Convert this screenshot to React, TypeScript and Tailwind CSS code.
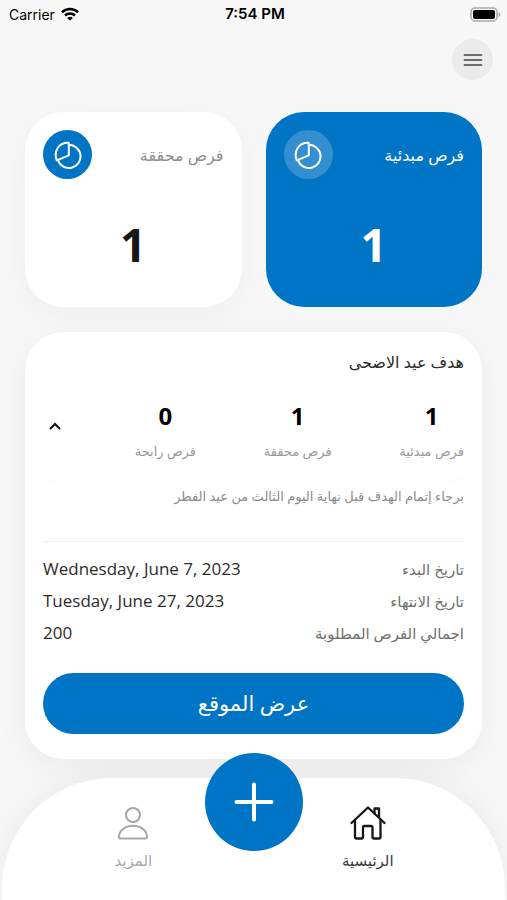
import { useState } from "react"

const chances = [
  { label: "فرص مبدئية", value: 1 },
  { label: "فرص محققة", value: 1 },
  { label: "فرص رابحة", value: 0 },
]

const details = [
  { label: "تاريخ البدء", value: "Wednesday, June 7, 2023" },
  { label: "تاريخ الانتهاء", value: "Tuesday, June 27, 2023" },
  { label: "اجمالي الفرص المطلوبة", value: "200" },
]

function PieIcon() {
  return (
    <svg width="28" height="28" viewBox="0 0 28 28" fill="none" stroke="currentColor" strokeWidth="2" strokeLinejoin="round" aria-hidden="true">
      <path d="M14.800 3.800a11.600 11.600 0 1 1-10.800 15.500" />
      <path d="M14.800 14.300V1.800C5.500 1 -1 10 2.800 19.300z" />
    </svg>
  )
}

function HomeIcon() {
  return (
    <svg width="36" height="34" viewBox="0 0 36 34" fill="none" stroke="currentColor" strokeWidth="2.300" strokeLinejoin="round" strokeLinecap="round" aria-hidden="true">
      <path d="M1.500 17 18 1.500 34.500 17" />
      <path d="M5 14.500V31q0 1.500 1.500 1.500h5q1.500 0 1.500-1.500v-9.500q0-1.500 1.500-1.500h6.500q1.500 0 1.500 1.500V31q0 1.500 1.500 1.500h5q1.500 0 1.500-1.500V14.500" />
      <path d="M24.500 7.500V2.500h4.500V11" />
    </svg>
  )
}

function PersonIcon() {
  return (
    <svg width="32" height="34" viewBox="0 0 32 34" fill="none" stroke="currentColor" strokeWidth="2" strokeLinejoin="round" aria-hidden="true">
      <circle cx="16" cy="9" r="7" />
      <path d="M2 31q0-5 4-8c5-4.500 15-4.500 20 0q4 3 4 8 0 1.500-1.500 1.500h-25Q2 32.500 2 31z" />
    </svg>
  )
}

function StatusBar() {
  return (
    <div dir="ltr" className="grid grid-cols-3 items-center h-7 ps-[9px] pe-[6px] text-black font-['Inter','Liberation_Sans',sans-serif]">
      <div className="flex items-center gap-1.5 text-[14px]">
        <span>Carrier</span>
        <svg width="18" height="14" viewBox="0 0 18 14" fill="none" stroke="currentColor" strokeWidth="2.600" aria-hidden="true">
          <path d="M1 5.200a11.500 11.500 0 0 1 16 0" />
          <path d="M4 8.500a7.200 7.200 0 0 1 10 0" />
          <path d="M9 13.800 6.200 11a4 4 0 0 1 5.600 0z" fill="currentColor" stroke="none" />
        </svg>
      </div>
      <span className="text-center text-[15px] font-semibold whitespace-nowrap">7:54 PM</span>
      <svg className="justify-self-end" width="31" height="15" viewBox="0 0 31 15" aria-hidden="true">
        <rect x="1" y="1" width="26" height="13" rx="4" fill="#f7f7f7" stroke="#a8a8a8" strokeWidth="1.500" />
        <rect x="3" y="3" width="22" height="9" rx="2" fill="#000" />
        <path d="M28.500 5v5q2-1 2-2.500t-2-2.500z" fill="#a8a8a8" />
      </svg>
    </div>
  )
}

function StatCard({ label, value, active }: { label: string, value: number, active?: boolean }) {
  return (
    <div className={`flex flex-col h-[195px] p-[18px] rounded-[38px] ${active ? "bg-[#0074c5] text-white" : "bg-white text-[#17171a] shadow-[0_8px_32px_rgba(0,0,0,0.04)]"}`}>
      <div className="flex items-center justify-between">
        <span className={`text-[16px] ${active ? "text-white" : "text-[#8e8e8e]"}`}>{label}</span>
        <span className={`flex items-center justify-center size-[49px] rounded-full text-white ${active ? "bg-white/20" : "bg-[#0074c5]"}`}>
          <PieIcon />
        </span>
      </div>
      <p className="mt-[35px] text-center text-[46px] leading-[60px] font-bold">{value}</p>
    </div>
  )
}

export default function App() {
  const [open, setOpen] = useState(true)

  return (
    <div dir="rtl" className="flex flex-col min-h-screen overflow-hidden bg-[#f7f7f7] text-[#2b2b2b] font-['Open_Sans','DejaVu_Sans',sans-serif]">
      <StatusBar />

      <header className="flex px-3.5 pt-[11px]">
        <button type="button" aria-label="القائمة" className="flex items-center justify-center size-[41px] rounded-full bg-[#ebebeb] text-[#444]">
          <svg width="20" height="14" viewBox="0 0 20 14" stroke="currentColor" strokeWidth="1.700" strokeLinecap="round" aria-hidden="true">
            <path d="M1.500 2h17M1.500 7h17M1.500 12h17" />
          </svg>
        </button>
      </header>

      <main className="flex flex-col gap-[25px] px-[25px] pt-8">
        <div className="grid grid-cols-2 gap-6">
          <StatCard label="فرص مبدئية" value={1} active />
          <StatCard label="فرص محققة" value={1} />
        </div>

        <section className="rounded-[38px] bg-white shadow-[0_8px_32px_rgba(0,0,0,0.05)]">
          <div className="px-[18px] pt-[18px] h-[149px] rounded-[38px] shadow-[0_4px_8px_rgba(0,0,0,0.01)]">
            <h2 className="text-[16px] leading-6">هدف عيد الاضحى</h2>
            <div className="flex items-center justify-between mt-[22px]">
              {chances.map((item) => (
                <div key={item.label} className="flex flex-col items-center">
                  <span className="text-[24px] leading-10 font-bold text-black">{item.value}</span>
                  <span className="mt-[5px] text-[13px] leading-5 text-[#9a9a9a]">{item.label}</span>
                </div>
              ))}
              <button type="button" aria-label="التفاصيل" aria-expanded={open} onClick={() => setOpen(!open)} className="flex items-center justify-center w-6 h-6 mb-1.5">
                <svg className={open ? "" : "rotate-180"} width="12" height="8" viewBox="0 0 12 8" fill="none" stroke="#111" strokeWidth="2" strokeLinecap="round" aria-hidden="true">
                  <path d="m1.500 6.500 4.500-4.500 4.500 4.500" />
                </svg>
              </button>
            </div>
          </div>

          {open && (
            <div className="px-[18px] pb-[25px]">
              <p className="pt-[5px] pb-[35px] text-[13px] leading-5 text-[#8c8c8c] border-b border-[#f0f0f0]">
                برجاء إتمام الهدف قبل نهاية اليوم الثالث من عيد الفطر
              </p>
              <dl className="pt-[11px]">
                {details.map((row) => (
                  <div key={row.label} className="flex items-center justify-between h-8">
                    <dt className="text-[15px] text-[#707070]">{row.label}</dt>
                    <dd dir="ltr" className="text-[17px]">{row.value}</dd>
                  </div>
                ))}
              </dl>
              <button type="button" className="w-full h-[61px] mt-6 rounded-full bg-[#0074c5] text-white text-[21px]">
                عرض الموقع
              </button>
            </div>
          )}
        </section>
      </main>

      <nav className="grid grid-cols-[1fr_98px_1fr] grow mt-[19px] mx-0.5 rounded-t-[110px] bg-white shadow-[0_-4px_32px_rgba(0,0,0,0.05)]">
        <a href="#home" className="flex flex-col items-center ps-[72px] pt-7 text-[#17171a]">
          <HomeIcon />
          <span className="mt-2.5 text-[15px] leading-5 text-[#3a3a3a]">الرئيسية</span>
        </a>
        <button type="button" aria-label="إضافة" className="flex items-center justify-center size-[98px] -mt-[25px] rounded-full bg-[#0074c5] text-white">
          <svg width="40" height="40" viewBox="0 0 40 40" stroke="currentColor" strokeWidth="4" strokeLinecap="round" aria-hidden="true">
            <path d="M20 2.500v35M2.500 20h35" />
          </svg>
        </button>
        <a href="#more" className="flex flex-col items-center pe-[60px] pt-7 text-[#a6a6a6]">
          <PersonIcon />
          <span className="mt-2.5 text-[15px] leading-5">المزيد</span>
        </a>
      </nav>
    </div>
  )
}
